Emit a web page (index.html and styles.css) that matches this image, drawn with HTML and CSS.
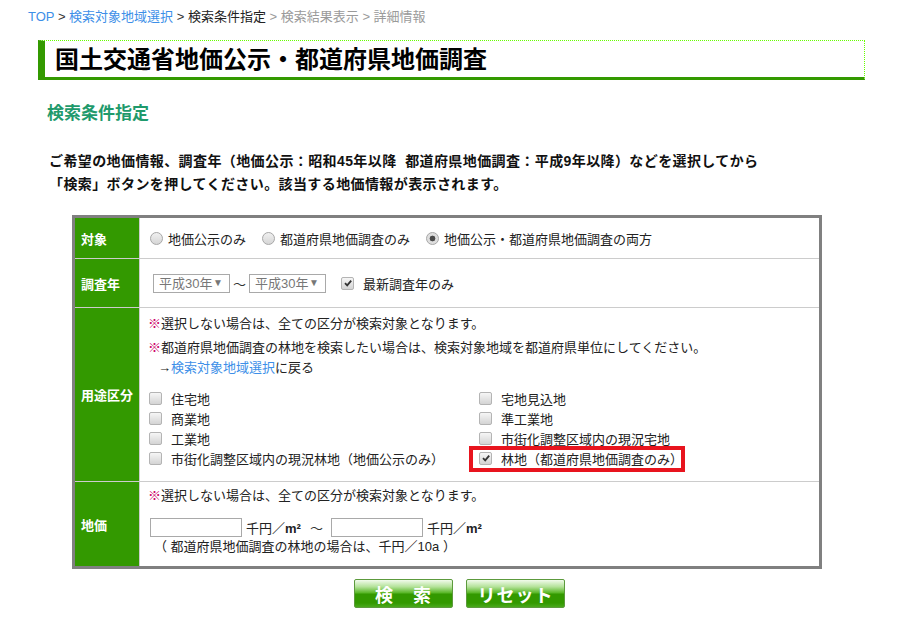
FILE: index.html
```html
<!DOCTYPE html>
<html lang="ja">
<head>
    <meta charset="UTF-8">
    <title>検索条件指定 | 国土交通省地価公示・都道府県地価調査</title>
    <link rel="stylesheet" href="styles.css">
</head>
<body>
    <div class="breadcrumb">
        <a href="#">TOP</a> &gt; <a href="#">検索対象地域選択</a> &gt; <span class="current">検索条件指定</span>
        <span class="future">&gt; 検索結果表示 &gt; 詳細情報</span>
    </div>

    <h1 class="page-title">国土交通省地価公示・都道府県地価調査</h1>

    <h2 class="section-title">検索条件指定</h2>

    <p class="lead">
        ご希望の地価情報、調査年（地価公示：昭和45年以降&nbsp;&nbsp;都道府県地価調査：平成9年以降）などを選択してから<br>
        「検索」ボタンを押してください。該当する地価情報が表示されます。
    </p>

    <table class="search-table">
        <tr class="row-target">
            <th>対象</th>
            <td>
                <div class="options">
                    <label><span class="radio"></span>地価公示のみ</label>
                    <label><span class="radio"></span>都道府県地価調査のみ</label>
                    <label><span class="radio is-on"></span>地価公示・都道府県地価調査の両方</label>
                </div>
            </td>
        </tr>
        <tr class="row-year">
            <th>調査年</th>
            <td>
                <div class="options">
                    <span class="select first">平成30年</span>
                    <span class="tilde">～</span>
                    <span class="select">平成30年</span>
                    <label class="latest"><span class="cb is-on"><svg viewBox="0 0 10 10" width="10" height="10"><path d="M2 5.2 L4.2 7.4 L8.2 2.6" fill="none" stroke="#333" stroke-width="1.8"/></svg></span>最新調査年のみ</label>
                </div>
            </td>
        </tr>
        <tr class="row-use">
            <th>用途区分</th>
            <td>
                <p class="note"><span class="mark">※</span>選択しない場合は、全ての区分が検索対象となります。</p>
                <p class="note note-2"><span class="mark">※</span>都道府県地価調査の林地を検索したい場合は、検索対象地域を都道府県単位にしてください。</p>
                <p class="back">→<a href="#">検索対象地域選択</a>に戻る</p>
                <div class="use-grid">
                    <label><span class="cb"></span>住宅地</label>
                    <label><span class="cb"></span>宅地見込地</label>
                    <label><span class="cb"></span>商業地</label>
                    <label><span class="cb"></span>準工業地</label>
                    <label><span class="cb"></span>工業地</label>
                    <label><span class="cb"></span>市街化調整区域内の現況宅地</label>
                    <label><span class="cb"></span>市街化調整区域内の現況林地（地価公示のみ）</label>
                    <label class="highlight"><span class="cb is-on"><svg viewBox="0 0 10 10" width="10" height="10"><path d="M2 5.2 L4.2 7.4 L8.2 2.6" fill="none" stroke="#333" stroke-width="1.8"/></svg></span>林地（都道府県地価調査のみ）</label>
                </div>
            </td>
        </tr>
        <tr class="row-price">
            <th>地価</th>
            <td>
                <p class="note"><span class="mark">※</span>選択しない場合は、全ての区分が検索対象となります。</p>
                <div class="price-range">
                    <input type="text" class="price-input">
                    <span class="unit">千円／<b>m²</b></span>
                    <span class="tilde">～</span>
                    <input type="text" class="price-input">
                    <span class="unit">千円／<b>m²</b></span>
                </div>
                <p class="price-note">（ 都道府県地価調査の林地の場合は、千円／10a ）</p>
            </td>
        </tr>
    </table>

    <div class="buttons">
        <button class="btn">検　索</button>
        <button class="btn">リセット</button>
    </div>
</body>
</html>
```

FILE: styles.css
```css
body {
    margin: 0;
    font-family: "Liberation Sans", "Noto Sans CJK JP", sans-serif;
    font-size: 13px;
    color: #222;
    background: #fff;
}
a {
    color: #3d8fe8;
    text-decoration: none;
}
p {
    margin: 0;
}
.breadcrumb {
    padding: 7px 0 0 28px;
    height: 19px;
    line-height: 19px;
    color: #333;
}
.breadcrumb .current {
    color: #222;
}
.breadcrumb .future {
    color: #9a9a9a;
}
.page-title {
    margin: 14px 0 0 38px;
    width: 809px;
    height: 36px;
    padding-left: 10px;
    border-left: 7px solid #339900;
    border-top: 1px dotted #66ff00;
    border-right: 1px dotted #66ff00;
    border-bottom: 3px solid #339900;
    font-size: 24px;
    line-height: 38px;
    font-weight: bold;
    color: #000;
}
.section-title {
    margin: 22px 0 0 47px;
    font-size: 17px;
    line-height: 24px;
    font-weight: bold;
    color: #1f9a6c;
}
.lead {
    margin: 24px 0 0 49px;
    font-size: 14px;
    line-height: 23px;
    font-weight: bold;
    letter-spacing: 0.4px;
    color: #111;
}
.search-table {
    margin: 19px 0 0 72px;
    width: 750px;
    border-collapse: collapse;
    border: 3px solid #808080;
}
.search-table th,
.search-table td {
    border: 1px solid #cccccc;
    vertical-align: middle;
}
.search-table th {
    width: 58px;
    padding: 0 0 0 6px;
    background: #339900;
    color: #fff;
    font-weight: bold;
    text-align: left;
}
.search-table td {
    padding: 0 0 0 8px;
}
.row-target td {
    height: 40px;
}
.row-year td {
    height: 48px;
}
.options {
    display: flex;
    align-items: center;
}
.options label {
    display: flex;
    align-items: center;
    margin-right: 14px;
}
.radio {
    width: 11px;
    height: 11px;
    margin: 0 5px 0 2px;
    border: 1px solid #a8a8a8;
    border-radius: 50%;
    background: linear-gradient(#f0f0f0, #d6d6d6);
}
.radio.is-on {
    background: radial-gradient(circle, #4a4a4a 0 2.6px, #dedede 3.2px);
}
.cb {
    display: inline-flex;
    align-items: center;
    justify-content: center;
    width: 11px;
    height: 11px;
    margin-right: 9px;
    border: 1px solid #b4b4b4;
    border-radius: 2px;
    background: linear-gradient(#f6f6f6, #d4d4d4);
}
.select {
    position: relative;
    width: 70px;
    height: 17px;
    padding-left: 5px;
    border: 1px solid #a9a9a9;
    line-height: 17px;
    color: #777;
}
.select.first {
    margin-left: 5px;
}
.select::after {
    content: "▼";
    position: absolute;
    right: 6px;
    top: -1px;
    font-size: 10px;
    color: #777;
}
.tilde {
    margin: 0 3px;
    color: #333;
}
.options label.latest {
    margin-left: 15px;
}
.row-use td {
    padding-top: 6px;
    padding-bottom: 13px;
}
.note,
.back {
    line-height: 20px;
}
.note-2 {
    margin-top: 4px;
}
.mark {
    color: #cc0066;
}
.back {
    padding-left: 10px;
}
.use-grid {
    display: grid;
    grid-template-columns: 330px 1fr;
    grid-auto-rows: 20px;
    margin-top: 10px;
    padding-left: 1px;
}
.use-grid label {
    display: flex;
    align-items: center;
}
.highlight {
    position: relative;
}
.highlight::before {
    content: "";
    position: absolute;
    left: -10px;
    top: -2px;
    width: 208px;
    height: 18px;
    border: 4px solid #e8141e;
}
.row-price td {
    padding-top: 4px;
    padding-bottom: 9px;
}
.price-range {
    display: flex;
    align-items: center;
    margin-top: 12px;
    padding-left: 2px;
}
.price-input {
    width: 88px;
    height: 15px;
    margin: 0;
    padding: 1px;
    border: 1px solid #a9a9a9;
    font: inherit;
}
.unit {
    margin-left: 4px;
}
.price-range .tilde {
    margin: 0 8px 0 9px;
}
.price-note {
    padding-left: 6px;
    line-height: 20px;
}
.buttons {
    display: flex;
    gap: 13px;
    margin: 10px 0 0 354px;
}
.btn {
    width: 99px;
    height: 29px;
    padding: 0;
    border: 1px solid #5c9a3c;
    border-radius: 2px;
    background: linear-gradient(#f2fbec 0%, #b4e29a 25%, #58b626 48%, #339900 52%, #339900 85%, #49a91c 100%);
    color: #fff;
    font-family: "Liberation Sans", "Noto Sans CJK JP", sans-serif;
    font-size: 18px;
    font-weight: bold;
    letter-spacing: 1px;
    cursor: pointer;
}
```
